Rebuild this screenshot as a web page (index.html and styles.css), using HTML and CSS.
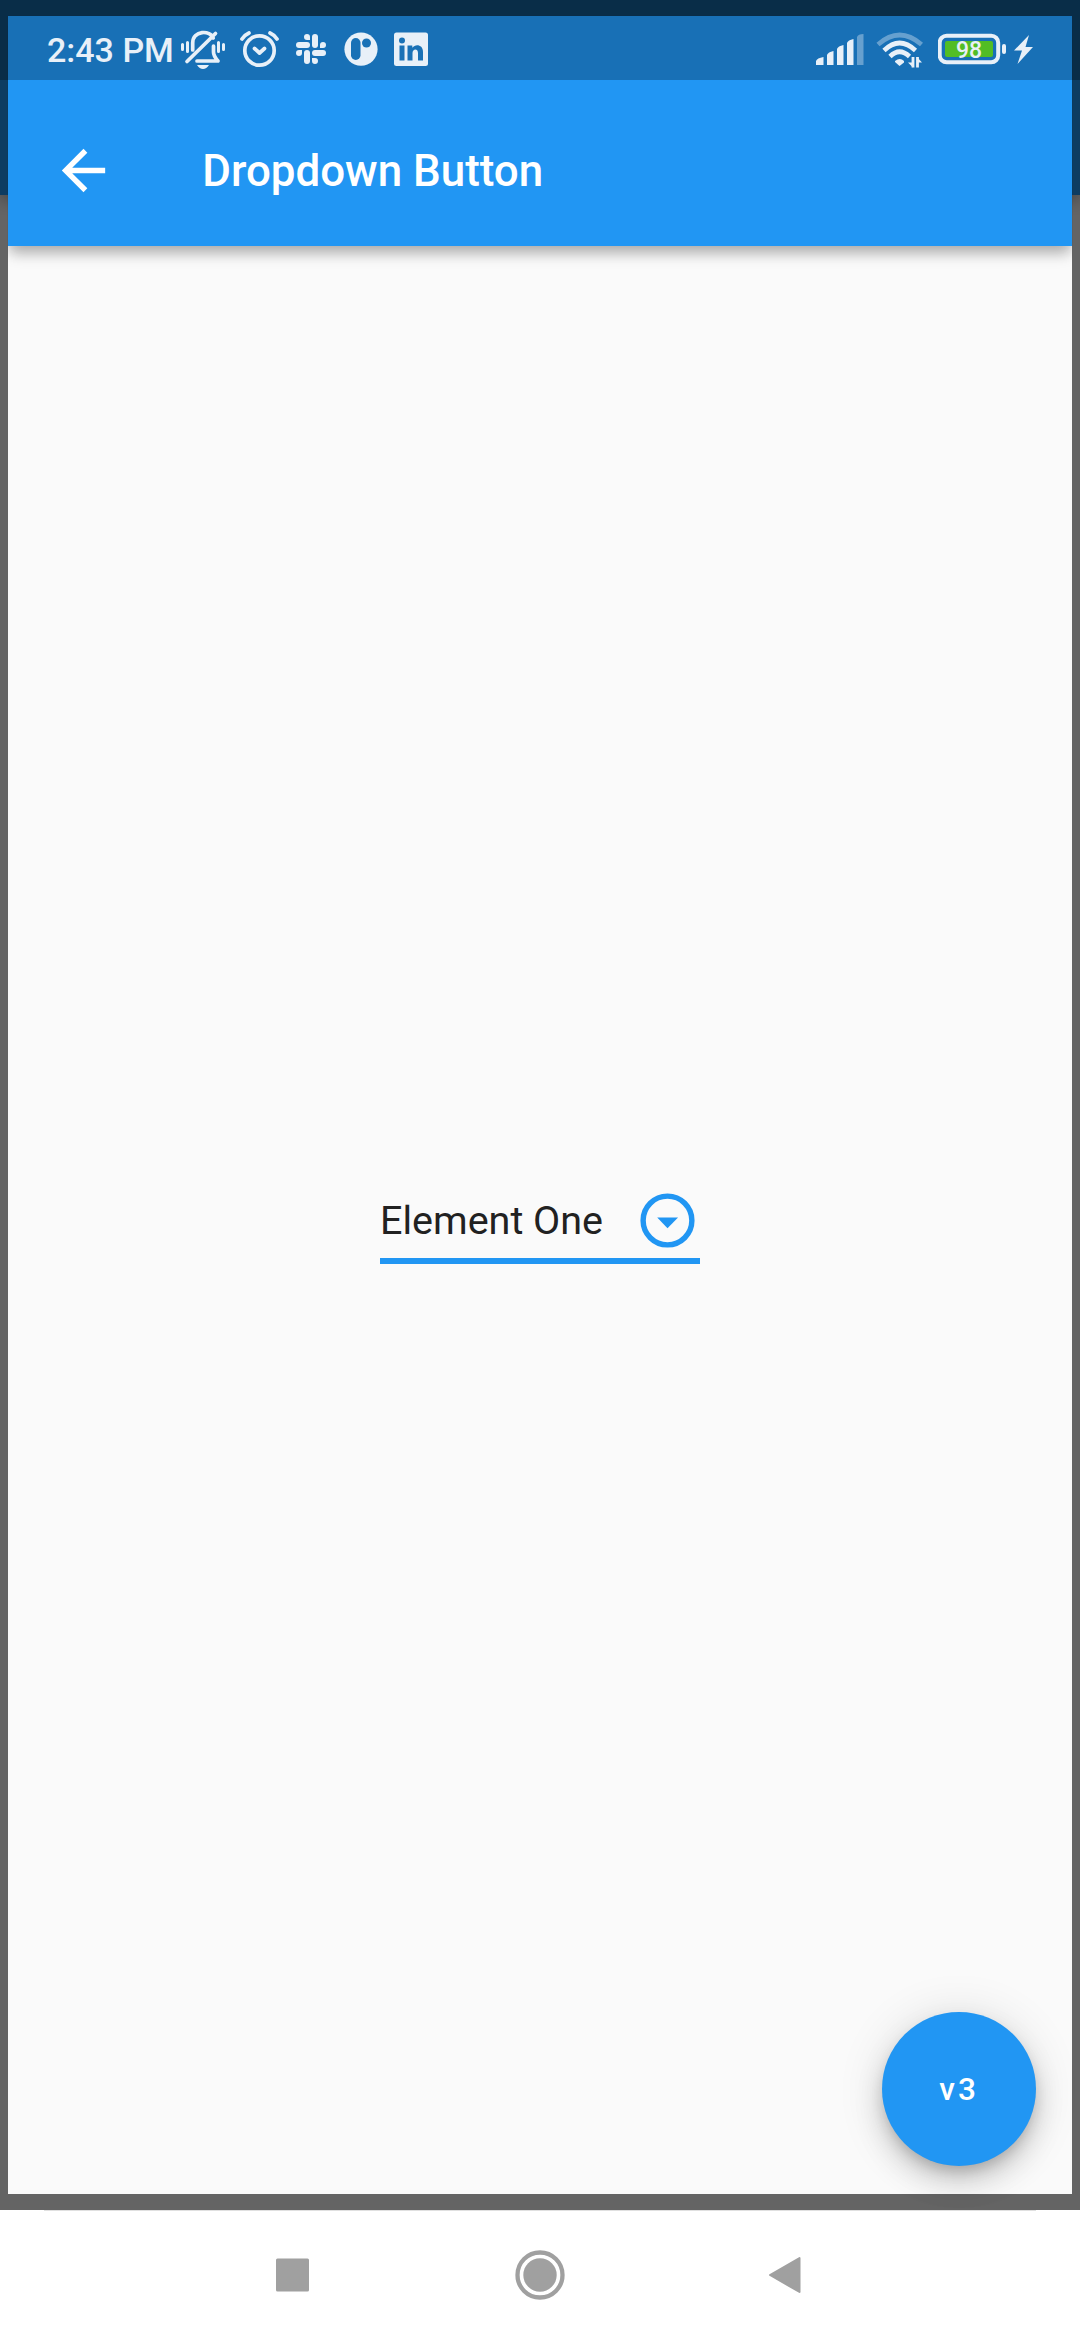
FILE: index.html
```html
<!DOCTYPE html>
<html lang="en">
<head>
<meta charset="utf-8">
<title>Dropdown Button</title>
<link rel="stylesheet" href="styles.css">
</head>
<body>
<div class="device">
  <div class="window">
    <div class="backdrop"><div class="backdrop-bar"></div></div>
    <div class="page">
      <header class="app-bar">
        <svg class="back" viewBox="0 0 24 24"><path fill="#fff" d="M20 11H7.830l5.590-5.590L12 4l-8 8 8 8 1.410-1.410L7.830 13H20v-2z"/></svg>
        <h1 class="title">Dropdown Button</h1>
      </header>
      <main class="content">
        <div class="dropdown">
          <span class="value">Element One</span>
          <svg class="chevron" viewBox="0 0 24 24"><circle cx="12" cy="12" r="9" fill="none" stroke="#2196f3" stroke-width="2"/><path fill="#2196f3" d="M8.200 10.900h7.700L12 14.900z"/></svg>
        </div>
      </main>
      <button class="fab">v3</button>
    </div>
    <div class="status-bar">
      <span class="time">2:43 PM</span>
      <svg class="bell" width="46" height="40" viewBox="180 30 46 40" fill="none" stroke="#e8f0f8" stroke-width="3.700" stroke-linecap="round" stroke-linejoin="round"><path d="M192.700 50V43c0-13 18-13 20.500-5M215.500 33.500 187 61.500M213.500 46v6q0 4 4.500 9H197"/><path stroke-width="3" d="M182.500 44.500v5M187.500 42.500v9M218.500 42.500v9M223.500 44.500v5"/><path fill="#e8f0f8" stroke="none" d="M197 65h12q-2.500 4-6 4t-6-4z"/></svg>
      <svg class="alarm" width="40" height="40" viewBox="240 30 40 40" fill="none" stroke="#e8f0f8" stroke-width="3.700"><circle cx="259.500" cy="50.500" r="14.700"/><path stroke-linecap="round" stroke-linejoin="round" d="m254.500 48.500 5 4.500 5-4.500M242 39q2.500-4 7-6M277 39q-2.500-4-7-6"/></svg>
      <svg class="slack" width="30" height="40" viewBox="296 30 30 40" fill="#e8f0f8"><rect x="312" y="34" width="6" height="14" rx="3"/><rect x="296" y="42" width="14" height="6" rx="3"/><rect x="304" y="50" width="6" height="14" rx="3"/><rect x="312" y="50" width="14" height="6" rx="3"/><path d="M310 40h-3a3 3 0 1 1 3-3zM320 48v-3a3 3 0 1 1 3 3zM312 58h3a3 3 0 1 1-3 3zM302 50v3a3 3 0 1 1-3-3z"/></svg>
      <svg class="disc" width="34" height="40" viewBox="344 30 34 40"><circle cx="361" cy="49.200" r="16.600" fill="#e8f0f8"/><rect x="351" y="38" width="9.500" height="22" rx="4.750" fill="#1971b6"/><circle cx="366.500" cy="43" r="4.500" fill="#1971b6"/></svg>
      <svg class="linkedin" width="34" height="40" viewBox="394 30 34 40"><rect x="394" y="32.500" width="34" height="33.500" rx="2.500" fill="#e8f0f8"/><g fill="#1971b6"><circle cx="402" cy="40.500" r="3"/><path d="M399.500 45.500h5V60.500h-5zM407.500 45.500h4.800v2.200c3-4 10.700-3.400 10.700 4.300v8.500h-5v-7.500c0-5-5.500-4.500-5.500 0v7.500h-5z"/></g></svg>
      <svg class="signal" width="49" height="40" viewBox="816 30 49 40" fill="#e8f0f8"><path d="M816 65v-4q1-3 7.500-4v8zM827 65V55q1-3 6.500-4v14zM837 65V49q1-3 6.500-4v20zM847 65V43q1-3 6.500-4v26z"/><path opacity=".38" d="M857 65V37q1-3 6.500-3v31z"/></svg>
      <svg class="wifi" width="47" height="40" viewBox="876 30 47 40" fill="none" stroke="#e8f0f8" stroke-width="4.600"><path opacity=".38" d="M878 44.500q21.500-19 43.500 0"/><path d="M884 50.500q15.500-15 31.500 0M890 56.500q9.500-9.500 19.500 0"/><path fill="#e8f0f8" stroke="none" d="M895 61q5-4 9 0v1.500l-4.500 3.500-4.500-4z"/><path stroke-width="2.800" d="M913 57v10.500M917.500 67.500V57"/><path fill="#e8f0f8" stroke="none" d="M908 62.500l5 5v-5zM922 62.500l-5-5.500v5.500z"/></svg>
      <svg class="battery" width="69" height="40" viewBox="938 30 69 40"><rect x="939.700" y="35.700" width="58.500" height="26.600" rx="7" fill="none" stroke="#e8f0f8" stroke-width="4"/><rect x="945" y="41" width="48" height="16" rx="2" fill="#52bd24"/><rect x="1002" y="44" width="4" height="10" rx="2" fill="#e8f0f8"/><text class="charge" x="969" y="57.500" text-anchor="middle">98</text></svg>
      <svg class="bolt" width="20" height="40" viewBox="1014 30 20 40"><path fill="#e8f0f8" d="M1029 35l-15 15.500h8L1017.500 64l15.500-17h-7.500z"/></svg>
    </div>
  </div>
  <nav class="nav-bar">
    <svg width="35" height="50" viewBox="0 0 35 50"><rect x="1" y="8.500" width="33" height="33" rx="1.500" fill="#a0a0a0"/></svg>
    <svg width="50" height="50" viewBox="0 0 50 50"><circle cx="25" cy="25" r="22.500" fill="none" stroke="#a0a0a0" stroke-width="4.300"/><circle cx="25" cy="25" r="16.700" fill="#a0a0a0"/></svg>
    <svg class="nav-back" width="35" height="50" viewBox="0 0 35 50"><path d="M29.500 8v34L0 25z" fill="#a0a0a0" stroke="#a0a0a0" stroke-width="2" stroke-linejoin="round"/></svg>
  </nav>
</div>
</body>
</html>
```
FILE: styles.css
```css
* { box-sizing: border-box; }
body { margin: 0; font-family: Roboto, sans-serif; }
svg { display: block; flex: none; }
.device { width: 1080px; height: 2340px; display: flex; flex-direction: column; background: #fff; }
.window { height: 2210px; display: grid; grid-template: 100% / 100%; overflow: hidden; }
.backdrop, .page, .status-bar { grid-area: 1 / 1; }
.backdrop { background: #646464; }
.backdrop-bar { height: 194.5px; background: #0d3c61; box-shadow: 0 5px 14px rgba(0, 0, 0, .3); }
.page { position: relative; margin: 15.6px 7.8px; background: #fafafa; display: flex; flex-direction: column; }
.app-bar { height: 230.6px; flex: none; padding: 79.4px 0 0 43px; display: flex; align-items: center; background: #2196f3; box-shadow: 0 11px 14px -3px rgba(0, 0, 0, .2), 0 5px 12px rgba(0, 0, 0, .15); clip-path: inset(0 0 -50px); }
.back { width: 65px; height: 65px; }
.title { margin: 0 0 0 86.5px; color: #fff; font-size: 43.9px; line-height: 52px; font-weight: 500; white-space: nowrap; }
.content { flex: 1; display: flex; justify-content: center; align-items: center; }
.dropdown { width: 320px; height: 76px; margin-top: 11px; display: flex; justify-content: space-between; border-bottom: 6px solid #2196f3; }
.value { color: #212121; font-size: 39.5px; line-height: 65px; white-space: nowrap; }
.chevron { width: 65px; height: 65px; }
.fab { position: absolute; right: 36px; bottom: 28px; width: 154px; height: 154px; border: 0; padding: 0; border-radius: 50%; background: #2196f3; color: #fff; font: 500 31.5px Roboto, sans-serif; letter-spacing: 3.2px; box-shadow: 0 8px 14px -3px rgba(0, 0, 0, .18), 0 16px 29px rgba(0, 0, 0, .15), 0 3px 48px rgba(0, 0, 0, .12); }
.status-bar { z-index: 1; height: 80px; padding: 20px 46px 0 47px; display: flex; align-items: center; background: rgba(0, 0, 0, .25); color: #e8f0f8; }
.time { width: 133px; font-size: 34px; font-weight: 500; white-space: nowrap; }
.alarm { margin-left: 14px; }
.slack { margin-left: 16px; }
.disc { margin-left: 18px; }
.linkedin { margin-left: 16px; }
.signal { margin-left: auto; }
.wifi { margin-left: 11px; }
.battery { margin-left: 15px; }
.bolt { margin-left: 7px; }
.charge { font: 500 23px Roboto, sans-serif; fill: #e8f0f8; }
.nav-bar { height: 130px; padding: 0 275px; display: flex; align-items: center; justify-content: space-between; background: linear-gradient(#e0e0e0, #e0e0e0) 44px 0 / 992px 1px no-repeat; }
.nav-back { overflow: visible; }
```
